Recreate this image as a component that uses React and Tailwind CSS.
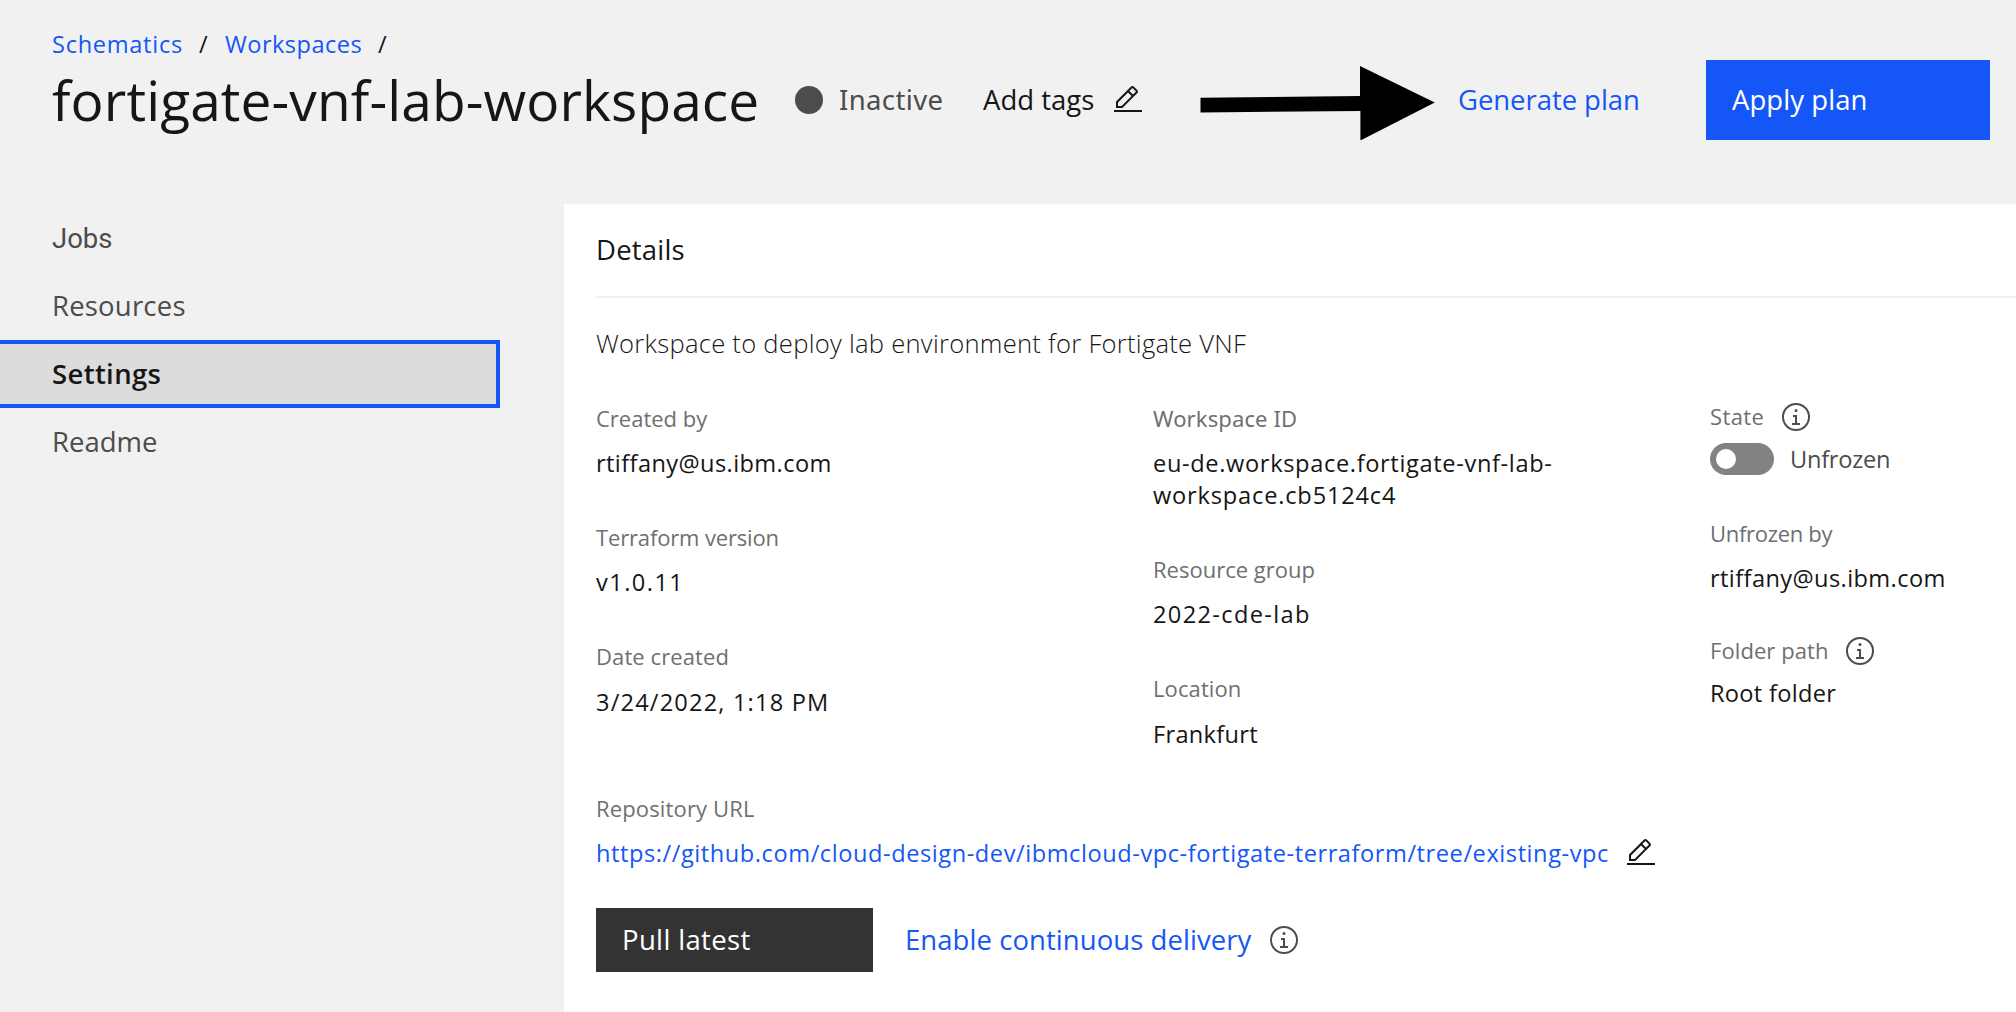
import React from "react";

function EditIcon() {
  return (
    <svg className="size-8 shrink-0" viewBox="0 0 32 32" fill="#161616">
      <path d="M2 26h28v2H2zM25.4 9c.8-.8.8-2 0-2.8l-3.6-3.6c-.8-.8-2-.8-2.8 0l-15 15V24h6.4l15-15zm-5-5L24 7.6l-3 3L17.4 7l3-3zM6 22v-3.6l10-10 3.6 3.6-10 10H6z" />
    </svg>
  );
}

function InfoIcon() {
  return (
    <svg className="size-8 shrink-0" viewBox="0 0 32 32" fill="#4c4c4c">
      <path d="M17 22v-8h-4v2h2v6h-3v2h8v-2h-3zM16 8a1.5 1.5 0 1 0 1.5 1.5A1.5 1.5 0 0 0 16 8z" />
      <path d="M16 30a14 14 0 1 1 14-14 14 14 0 0 1-14 14zm0-26a12 12 0 1 0 12 12A12 12 0 0 0 16 4z" />
    </svg>
  );
}

const labelText = "text-[22px] leading-8 text-[#6f6f6f]";
const valueText = "text-[23.6px] leading-8 text-[#161616]";

function Field({ label, value, labelClass, valueClass }) {
  return (
    <div className="flex flex-col items-start gap-[13px]">
      <div className={`${labelText} ${labelClass}`}>{label}</div>
      <div className={`${valueText} ${valueClass}`}>{value}</div>
    </div>
  );
}

function Header() {
  return (
    <header className="flex h-[204px] shrink-0 flex-col pl-[52px] pt-7">
      <nav className="flex h-8 text-[23.6px] leading-8 text-[#1557f6]">
        <a className="w-[147px] tracking-[0.7px]">Schematics</a>
        <span className="w-[26px] text-[#161616]">/</span>
        <a className="w-[153px] tracking-[0.45px]">Workspaces</a>
        <span className="text-[#161616]">/</span>
      </nav>
      <div className="flex h-20 items-center text-[27.5px] leading-10">
        <h1 className="w-[743px] shrink-0 text-[55px] leading-[80px] tracking-[0.12px] text-[#161616]">fortigate-vnf-lab-workspace</h1>
        <span className="mr-4 size-7 shrink-0 rounded-full bg-[#4c4c4c]" />
        <span className="w-[144px] shrink-0 font-['Noto_Sans',sans-serif] tracking-[0.37px] text-[#4c4c4c]">Inactive</span>
        <span className="w-[129px] shrink-0 text-[#161616]">Add tags</span>
        <EditIcon />
        <svg className="ml-14 h-20 w-[236px] shrink-0" viewBox="0 0 236 80">
          <path d="M.5 37.8 160 36V6l74.8 36.6L160.4 80.5V51L.5 52.5z" fill="#000" />
        </svg>
        <a className="ml-[22px] w-[248px] shrink-0 tracking-[-0.06px] text-[#1557f6]">Generate plan</a>
        <button className="h-20 w-[284px] shrink-0 bg-[#1557f6] pl-[26px] text-left tracking-[0.06px] text-white">Apply plan</button>
      </div>
    </header>
  );
}

function Sidebar() {
  return (
    <nav className="flex w-[564px] shrink-0 flex-col text-[27.5px] text-[#4c4c4c]">
      <a className="h-[68px] w-[500px] pl-[52px] font-['Roboto',sans-serif] leading-[70px]">Jobs</a>
      <a className="h-[68px] w-[500px] pl-[52px] leading-[68px] tracking-[0.2px]">Resources</a>
      <a className="h-[68px] w-[500px] border-y-4 border-r-4 border-[#1557f6] bg-[#dcdcdc] pl-[52px] font-semibold leading-[60px] tracking-[0.35px] text-[#161616]">Settings</a>
      <a className="h-[68px] w-[500px] pl-[52px] leading-[68px]">Readme</a>
    </nav>
  );
}

function Details() {
  return (
    <main className="flex grow flex-col bg-white pl-8 pt-[26px]">
      <h2 className="h-[68px] border-b-2 border-[#f1f1f1] text-[27.5px] leading-10 tracking-[0.2px] text-[#161616]">Details</h2>
      <p className="mt-[26px] text-[25.6px] font-light leading-10 tracking-[0.26px] text-[#161616]">Workspace to deploy lab environment for Fortigate VNF</p>
      <div className="mt-[38px] flex h-[390px] shrink-0">
        <div className="flex w-[557px] shrink-0 flex-col gap-[42px]">
          <Field label="Created by" value="rtiffany@us.ibm.com" valueClass="tracking-[0.4px]" labelClass="" />
          <Field label="Terraform version" value="v1.0.11" labelClass="tracking-[-0.15px]" valueClass="tracking-[1.45px]" />
          <Field label="Date created" value="3/24/2022, 1:18 PM" labelClass="tracking-[0.1px]" valueClass="tracking-[1.18px] mt-px" />
        </div>
        <div className="flex w-[557px] shrink-0 flex-col gap-[42px]">
          <Field
            label="Workspace ID"
            value={<>eu-de.workspace.fortigate-vnf-lab-<br /><span className="tracking-[0.82px]">workspace.cb5124c4</span></>}
            labelClass="font-['Noto_Sans',sans-serif] tracking-[0.12px]"
            valueClass="tracking-[0.65px]"
          />
          <Field label="Resource group" value="2022-cde-lab" labelClass="" valueClass="tracking-[1.35px]" />
          <Field label="Location" value="Frankfurt" labelClass="tracking-[0.1px]" valueClass="tracking-[0.3px] mt-px" />
        </div>
        <div className="-mt-px flex flex-col">
          <div className="flex">
            <span className={`${labelText} -mt-px w-[70px] tracking-[0.38px]`}>State</span>
            <InfoIcon />
          </div>
          <div className="mt-[10px] flex items-center">
            <span className="flex h-8 w-16 items-center rounded-full bg-[#828282] pl-1.5">
              <span className="size-5 rounded-full bg-white" />
            </span>
            <span className="ml-4 text-[23.6px] leading-8 tracking-[-0.25px] text-[#4c4c4c]">Unfrozen</span>
          </div>
          <div className="mt-[42px]">
            <Field label="Unfrozen by" value="rtiffany@us.ibm.com" labelClass="tracking-[-0.3px]" valueClass="tracking-[0.4px]" />
          </div>
          <div className="mt-[41px] flex">
            <span className={`${labelText} -mt-px w-[134px] tracking-[0.08px]`}>Folder path</span>
            <InfoIcon />
          </div>
          <div className={`${valueText} mt-[10px] tracking-[0.3px]`}>Root folder</div>
        </div>
      </div>
      <div className={`${labelText} tracking-[0.15px]`}>Repository URL</div>
      <div className="mt-[13px] flex">
        <a className="w-[1029px] shrink-0 text-[23.6px] leading-8 tracking-[0.56px] text-[#1557f6]">https://github.com/cloud-design-dev/ibmcloud-vpc-fortigate-terraform/tree/existing-vpc</a>
        <EditIcon />
      </div>
      <div className="mt-[39px] flex h-16 items-center text-[27.5px] leading-10">
        <button className="h-16 w-[277px] bg-[#333] pl-[26px] text-left tracking-[0.35px] text-white">Pull latest</button>
        <a className="ml-8 w-[363px] tracking-[0.06px] text-[#1557f6]">Enable continuous delivery</a>
        <InfoIcon />
      </div>
    </main>
  );
}

export default function App() {
  return (
    <div className="flex h-[1012px] w-[2016px] flex-col overflow-hidden whitespace-nowrap bg-[#f1f1f1] font-['Open_Sans','Noto_Sans',sans-serif]">
      <Header />
      <div className="flex grow">
        <Sidebar />
        <Details />
      </div>
    </div>
  );
}
